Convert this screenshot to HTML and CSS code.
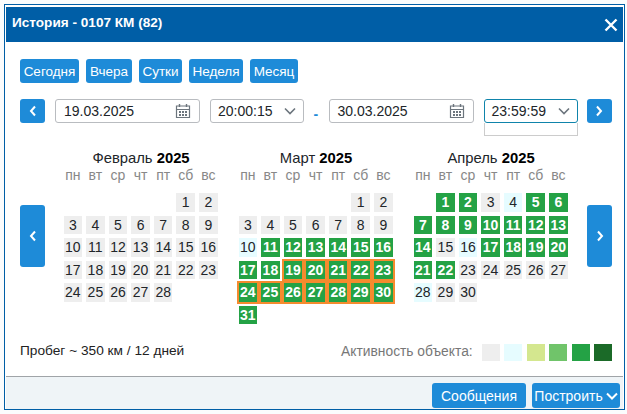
FILE: index.html
```html
<!DOCTYPE html>
<html lang="ru">
<head>
<meta charset="UTF-8">
<title>История - 0107 КМ (82)</title>
<link rel="stylesheet" href="styles.css">
</head>
<body>
  <div class="dialog">
    <!-- Header -->
    <div class="dialog-head">
      <span class="dialog-title">История - 0107 КМ (82)</span>
      <svg class="close-icon" width="14" height="14" viewBox="0 0 14 14"><path d="M1.5 1.5l11 11M12.5 1.5l-11 11" stroke="#fff" stroke-width="2.4" fill="none"/></svg>
    </div>

    <div class="dialog-body">
      <!-- Quick ranges -->
      <div class="quick-row">
        <button class="btn">Сегодня</button>
        <button class="btn">Вчера</button>
        <button class="btn">Сутки</button>
        <button class="btn">Неделя</button>
        <button class="btn">Месяц</button>
      </div>

      <!-- Date range -->
      <div class="range-row">
        <button class="btn btn-arrow"><svg width="10" height="12" viewBox="0 0 10 12"><path d="M7 1.5L3 6l4 4.5" stroke="#fff" stroke-width="2" fill="none"/></svg></button>
        <div class="field date-field">
          <span>19.03.2025</span>
          <svg width="16" height="16" viewBox="0 0 16 16"><path d="M1.5 3h13v11.5h-13zM1.5 6.5h13" stroke="#6c757d" stroke-width="1.2" fill="none"/><path d="M4.5 1v3M11.5 1v3" stroke="#6c757d" stroke-width="1.4"/><path d="M4 8h2v2H4zM7 8h2v2H7zM10 8h2v2h-2zM4 11h2v2H4zM7 11h2v2H7zM10 11h2v2h-2z" fill="#6c757d"/></svg>
        </div>
        <div class="field time-field">
          <span>20:00:15</span>
          <svg width="12" height="8" viewBox="0 0 12 8"><path d="M1 1.5l5 5 5-5" stroke="#6c757d" stroke-width="1.6" fill="none"/></svg>
        </div>
        <span class="range-dash">-</span>
        <div class="field date-field date-end">
          <span>30.03.2025</span>
          <svg width="16" height="16" viewBox="0 0 16 16"><path d="M1.5 3h13v11.5h-13zM1.5 6.5h13" stroke="#6c757d" stroke-width="1.2" fill="none"/><path d="M4.5 1v3M11.5 1v3" stroke="#6c757d" stroke-width="1.4"/><path d="M4 8h2v2H4zM7 8h2v2H7zM10 8h2v2h-2zM4 11h2v2H4zM7 11h2v2H7zM10 11h2v2h-2z" fill="#6c757d"/></svg>
        </div>
        <div class="field time-field time-open">
          <span>23:59:59</span>
          <svg width="12" height="8" viewBox="0 0 12 8"><path d="M1 1.5l5 5 5-5" stroke="#6c757d" stroke-width="1.6" fill="none"/></svg>
          <div class="time-drop"></div>
        </div>
        <button class="btn btn-arrow"><svg width="10" height="12" viewBox="0 0 10 12"><path d="M3 1.5L7 6l-4 4.5" stroke="#fff" stroke-width="2" fill="none"/></svg></button>
      </div>

      <!-- Calendars -->
      <div class="cal-row">
        <button class="btn btn-side"><svg width="10" height="12" viewBox="0 0 10 12"><path d="M7 1.5L3 6l4 4.5" stroke="#fff" stroke-width="2" fill="none"/></svg></button>
        <div class="months">
          <div class="month">
            <div class="month-name">Февраль <b>2025</b></div>
            <div class="weekdays"><span>пн</span><span>вт</span><span>ср</span><span>чт</span><span>пт</span><span>сб</span><span>вс</span></div>
            <div class="days">
              <i class="start-6 d0">1</i><i class="d0">2</i>
              <i class="d0">3</i><i class="d0">4</i><i class="d0">5</i><i class="d0">6</i><i class="d0">7</i><i class="d0">8</i><i class="d0">9</i>
              <i class="d0">10</i><i class="d0">11</i><i class="d0">12</i><i class="d0">13</i><i class="d0">14</i><i class="d0">15</i><i class="d0">16</i>
              <i class="d0">17</i><i class="d0">18</i><i class="d0">19</i><i class="d0">20</i><i class="d0">21</i><i class="d0">22</i><i class="d0">23</i>
              <i class="d0">24</i><i class="d0">25</i><i class="d0">26</i><i class="d0">27</i><i class="d0">28</i>
            </div>
          </div>
          <div class="month">
            <div class="month-name">Март <b>2025</b></div>
            <div class="weekdays"><span>пн</span><span>вт</span><span>ср</span><span>чт</span><span>пт</span><span>сб</span><span>вс</span></div>
            <div class="days">
              <i class="start-6 d0">1</i><i class="d0">2</i>
              <i class="d0">3</i><i class="d0">4</i><i class="d0">5</i><i class="d0">6</i><i class="d0">7</i><i class="d0">8</i><i class="d0">9</i>
              <i class="d1">10</i><i class="d4">11</i><i class="d4">12</i><i class="d4">13</i><i class="d4">14</i><i class="d4">15</i><i class="d4">16</i>
              <i class="d4">17</i><i class="d4">18</i><i class="d4 sel">19</i><i class="d4 sel">20</i><i class="d4 sel">21</i><i class="d4 sel">22</i><i class="d4 sel">23</i>
              <i class="d4 sel">24</i><i class="d4 sel">25</i><i class="d4 sel">26</i><i class="d4 sel">27</i><i class="d4 sel">28</i><i class="d4 sel">29</i><i class="d4 sel">30</i>
              <i class="d4">31</i>
            </div>
          </div>
          <div class="month">
            <div class="month-name">Апрель <b>2025</b></div>
            <div class="weekdays"><span>пн</span><span>вт</span><span>ср</span><span>чт</span><span>пт</span><span>сб</span><span>вс</span></div>
            <div class="days">
              <i class="start-2 d4">1</i><i class="d4">2</i><i class="d0">3</i><i class="d1">4</i><i class="d4">5</i><i class="d4">6</i>
              <i class="d4">7</i><i class="d4">8</i><i class="d4">9</i><i class="d4">10</i><i class="d4">11</i><i class="d4">12</i><i class="d4">13</i>
              <i class="d4">14</i><i class="d0">15</i><i class="d1">16</i><i class="d4">17</i><i class="d4">18</i><i class="d4">19</i><i class="d4">20</i>
              <i class="d4">21</i><i class="d4">22</i><i class="d0">23</i><i class="d0">24</i><i class="d0">25</i><i class="d0">26</i><i class="d0">27</i>
              <i class="d1">28</i><i class="d0">29</i><i class="d0">30</i>
            </div>
          </div>
        </div>
        <button class="btn btn-side"><svg width="10" height="12" viewBox="0 0 10 12"><path d="M3 1.5L7 6l-4 4.5" stroke="#fff" stroke-width="2" fill="none"/></svg></button>
      </div>

      <!-- Summary and legend -->
      <div class="summary-row">
        <span class="mileage">Пробег ~ 350 км / 12 дней</span>
        <div class="legend">
          <span class="legend-label">Активность объекта:</span>
          <i class="d0"></i><i class="d1"></i><i class="d2"></i><i class="d3"></i><i class="d4"></i><i class="d5"></i>
        </div>
      </div>
    </div>

    <!-- Footer -->
    <div class="dialog-foot">
      <button class="btn btn-foot">Сообщения</button>
      <button class="btn btn-foot btn-build">Построить <svg width="12" height="8" viewBox="0 0 12 8"><path d="M1 1.5l5 5 5-5" stroke="#fff" stroke-width="2" fill="none"/></svg></button>
    </div>
  </div>
</body>
</html>
```

FILE: styles.css
```css
*{box-sizing:border-box;}
body{
  margin:0;
  padding:4px 2px 4px 4px;
  height:414px;
  overflow:hidden;
  background:#fbfcfd;
  font-family:"Liberation Sans",Arial,sans-serif;
  font-size:14px;
  color:#212529;
}
.dialog{
  height:406px;
  display:flex;
  flex-direction:column;
  background:#fff;
  border:1px solid #005ea6;
}
.dialog-head{
  height:35px;
  margin:2px 1px 0;
  flex:none;
  display:flex;
  justify-content:space-between;
  align-items:center;
  padding:0 5px 0 6px;
  background:#005ea6;
  color:#fff;
}
.dialog-title{font-weight:bold;font-size:13.6px;margin-top:-5px;}
.dialog-body{flex:1;padding:17px 12px 0 15px;}
.btn{
  border:0;
  border-radius:3px;
  background:#1e8bd8;
  color:#fff;
  font:14px "Liberation Sans",Arial,sans-serif;
  padding:0;
  height:24px;
  display:flex;
  align-items:center;
  justify-content:center;
}
.quick-row{display:grid;grid-template-columns:59px 46px 43px 54px 48px;gap:7px;}
.quick-row .btn{font-size:13.5px;}
.range-row{display:flex;align-items:center;margin-top:16px;height:24px;}
.btn-arrow{width:25px;}
.field{
  position:relative;
  height:24px;
  display:flex;
  align-items:center;
  justify-content:space-between;
  border:1px solid #b9bcc0;
  border-radius:3px;
  background:#fff;
}
.date-field{width:145px;margin-left:10px;padding:0 8px;}
.time-field{width:94px;margin-left:10px;padding:0 7px;}
.time-open{border-color:#0f84ab;margin-right:9px;}
.time-drop{
  position:absolute;
  left:-1px;
  right:-1px;
  top:23px;
  height:13px;
  border:1px solid #ccc;
  border-top:0;
  background:#fff;
}
.range-dash{width:15px;margin-left:9.5px;padding-top:5px;color:#1e8bd8;font-size:14px;font-weight:bold;}
.date-end{margin-left:0;}
.cal-row{display:flex;align-items:center;justify-content:space-between;margin-top:27px;}
.btn-side{width:25px;height:62px;margin-bottom:2px;}
.months{display:flex;gap:17px;}
.month{width:158px;}
.month-name{text-align:center;line-height:16px;font-size:14.8px;}
.month-name b{color:#000;}
.weekdays{display:grid;grid-template-columns:repeat(7,18.6px);column-gap:4px;margin-top:1px;padding-left:1.5px;line-height:16px;height:26px;}
.weekdays span{text-align:center;font-size:14px;color:#888;}
.days{display:grid;grid-template-columns:repeat(7,18.6px);grid-auto-rows:18.5px;gap:4px;padding-left:1.5px;}
.days i{
  font-style:normal;
  font-size:14px;
  line-height:18.5px;
  text-align:center;
  white-space:nowrap;
  display:flex;
  justify-content:center;
}
.start-6{grid-column-start:6;}
.start-2{grid-column-start:2;}
.d0{background:#eee;}
.d1{background:#e6fcff;}
.d2{background:#d4e78f;}
.d3{background:#70c46a;}
.d4{background:#24a245;}
.d5{background:#1b6a28;}
.days .d4{color:#fff;font-weight:bold;}
.days .sel{box-shadow:0 0 0 2px #f58b2e;}
.summary-row{display:flex;align-items:center;justify-content:space-between;margin-top:20px;height:17px;}
.mileage{font-size:13.7px;color:#222;margin-top:-4px;}
.legend{display:flex;align-items:center;gap:4.4px;}
.legend i{width:18px;height:17px;}
.legend-label{color:#777;margin-right:5px;font-size:13.8px;margin-top:-3px;}
.dialog-foot{
  height:33px;
  margin:0 1px;
  flex:none;
  display:flex;
  justify-content:flex-end;
  align-items:flex-end;
  gap:6px;
  padding:0 3px 1px 0;
  background:#eff4f7;
  border-top:1px solid #a0a4a8;
}
.btn-foot{width:94px;height:25px;}
.btn-build{width:88px;gap:3px;}
```
